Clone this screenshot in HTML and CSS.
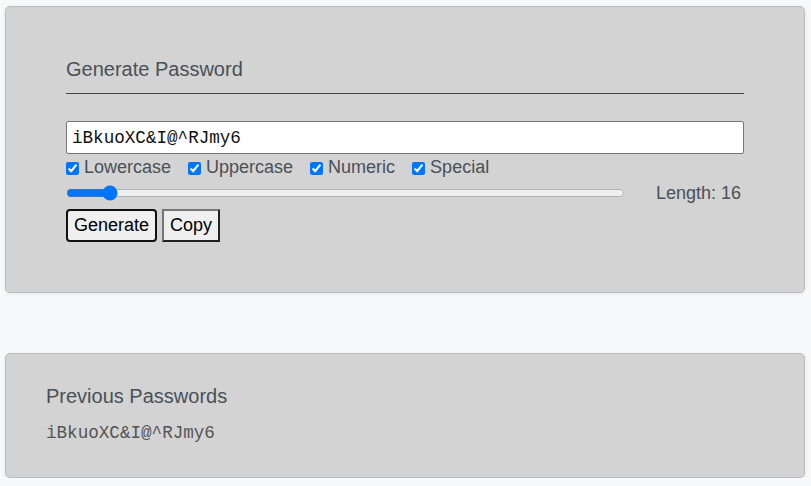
FILE: index.html
```html
<!DOCTYPE html>
<html lang="en">
<head>
<meta charset="utf-8">
<title>Password Generator</title>
<link rel="stylesheet" href="styles.css">
</head>
<body>
<main class="page">
  <section class="card card-gen">
    <h2 class="title title-rule">Generate Password</h2>
    <input class="pw-field" type="text" value="iBkuoXC&amp;I@^RJmy6" readonly>
    <div class="options">
      <label class="opt"><input type="checkbox" checked>Lowercase</label>
      <label class="opt"><input type="checkbox" checked>Uppercase</label>
      <label class="opt"><input type="checkbox" checked>Numeric</label>
      <label class="opt"><input type="checkbox" checked>Special</label>
    </div>
    <div class="length-row">
      <input class="slider" type="range" min="8" max="128" value="16">
      <span class="length-label">Length: 16</span>
    </div>
    <div class="actions">
      <button class="btn btn-focus" type="button">Generate</button>
      <button class="btn" type="button">Copy</button>
    </div>
  </section>
  <section class="card card-history">
    <h2 class="title">Previous Passwords</h2>
    <p class="history-item">iBkuoXC&amp;I@^RJmy6</p>
  </section>
</main>
</body>
</html>
```
FILE: styles.css
```css
html, body {
  margin: 0;
  padding: 0;
}
body {
  background: #f8f9fa;
  font-family: "Liberation Sans", Arial, sans-serif;
  color: #495057;
}
.page {
  width: 800px;
  margin: 6px 0 0 5px;
  display: flex;
  flex-direction: column;
  gap: 60px;
}
.card {
  background: #d3d3d3;
  border: 1px solid #bcbcbc;
  border-radius: 5px;
  box-shadow: 0 1px 4px rgba(0, 0, 0, 0.08);
}
.card-gen {
  padding: 51px 60px 50px;
}
.title {
  margin: 0;
  font-size: 20px;
  font-weight: normal;
  line-height: 23px;
  color: #495057;
}
.title-rule {
  padding-bottom: 12px;
  border-bottom: 1px solid #444;
}
.pw-field {
  display: block;
  box-sizing: border-box;
  width: 100%;
  height: 33px;
  margin: 27px 0 0;
  padding: 0 5px;
  border: 1px solid #767676;
  border-radius: 2px;
  background: #fff;
  font-family: "Liberation Mono", "Courier New", monospace;
  font-size: 17.6px;
  color: #111;
}
.options {
  display: flex;
  gap: 17px;
  margin-top: 3px;
  font-size: 18px;
  line-height: 21px;
}
.opt {
  display: flex;
  align-items: center;
}
.opt input {
  width: 13px;
  height: 13px;
  margin: 1px 5px 0 0;
}
.length-row {
  display: flex;
  align-items: center;
  margin-top: 2px;
  height: 26px;
}
.slider {
  width: 559px;
  margin: 0;
}
.length-label {
  margin-left: auto;
  margin-right: 3px;
  font-size: 18px;
  line-height: 21px;
}
.actions {
  display: flex;
  gap: 5px;
  margin-top: 3px;
}
.btn {
  box-sizing: border-box;
  height: 33px;
  padding: 0 6px;
  background: #efefef;
  border: 2px outset #767676;
  border-radius: 0;
  font-family: "Liberation Sans", Arial, sans-serif;
  font-size: 18px;
  color: #000;
}
.btn-focus {
  border: 2px solid #101010;
  border-radius: 4px;
}
.card-history {
  padding: 31px 40px 34px;
}
.history-item {
  margin: 15px 0 0;
  font-family: "Liberation Mono", "Courier New", monospace;
  font-size: 17.6px;
  line-height: 20px;
  color: #555;
}
```
